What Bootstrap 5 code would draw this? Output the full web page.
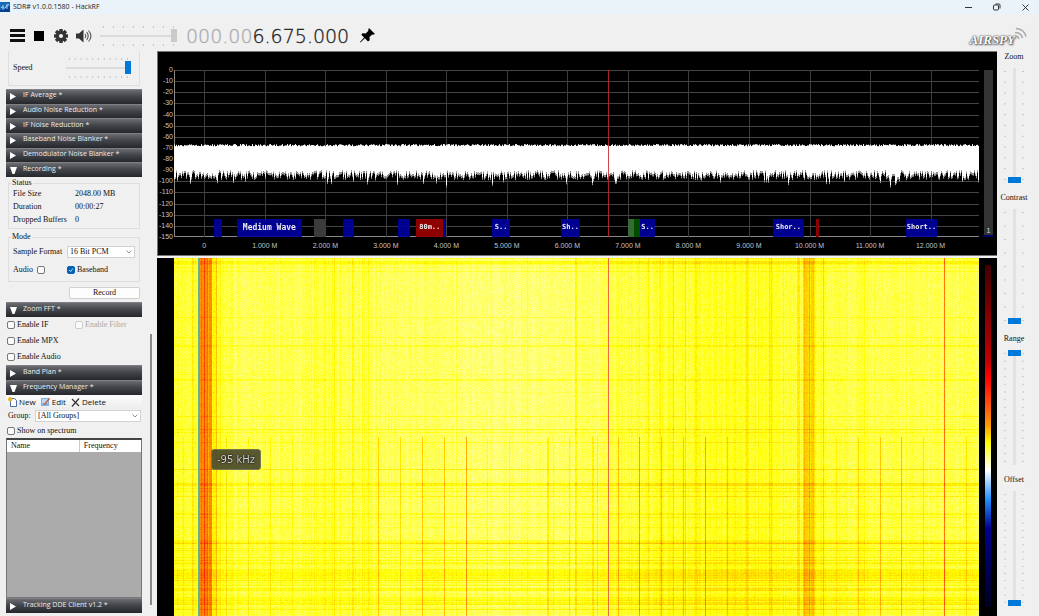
<!DOCTYPE html>
<html lang="en">
<head>
<meta charset="utf-8">
<meta name="viewport" content="width=device-width, initial-scale=1">
<title>SDR# v1.0.0.1580 - HackRF</title>
<link href="https://cdn.jsdelivr.net/npm/bootstrap@5.3.0/dist/css/bootstrap.min.css" rel="stylesheet">
<style>
  :root { --ui: "Open Sans", "Noto Sans", sans-serif; --form: "Liberation Serif", serif; --axis: "Liberation Sans", Arial, sans-serif; }
  body { background: #f0f0f0; color: #111; font: 8px/10px var(--form); }
  button, input, select { font: inherit; color: inherit; }
  .plain-btn { border: 0; background: none; padding: 0; line-height: 0; }
  .title-bar { height: 14px; background: #eaf3f9; font: 7px/14px var(--ui); color: #222; }
  .win-btns { gap: 21px; padding-right: 10px; }
  .tool-bar { height: 37px; padding: 6px 12px 0 10px; }
  .freq { font: 200 19px/24px "DejaVu Sans", sans-serif; -webkit-text-stroke: 0.3px; color: #222; margin: 0 11px 0 9px; }
  .freq .idle { color: #aaa; }
  .brand-word { font: italic bold 13px/16px var(--form); color: #fff; text-shadow: 0 0 2px #444, 1px 1px 2px #555, 0 0 1px #333; }

  /* sliders */
  input[type=range] { appearance: none; -webkit-appearance: none; background: none; margin: 0; padding: 0; display: block; min-width: 0; }
  .h-slide { --tick: #c4c4c4; background-image: linear-gradient(90deg, var(--tick) 1px, transparent 1px), linear-gradient(90deg, var(--tick) 1px, transparent 1px);
    background-size: calc((100% - 7px) / var(--n)) 2px; background-repeat: repeat-x; background-position: 3px 0, 3px 100%; height: 20px; padding: 3px 0; min-width: 0; }
  .h-slide input { width: 100%; height: 14px; }
  .h-slide input::-webkit-slider-runnable-track { height: 2px; background: #dadada; }
  .h-slide input::-webkit-slider-thumb { -webkit-appearance: none; width: 6px; height: 13px; margin-top: -6px; background: #0078d7; }
  .h-slide.dim { width: 77px; }
  .h-slide.dim input::-webkit-slider-thumb { background: #cacaca; }
  .v-slide { width: 20px; flex: 1 1 0; min-height: 0; display: flex; justify-content: center; position: relative; }
  .v-slide::before, .v-slide::after { content: ""; width: 2px; margin: 3px 0; flex: none;
    background: linear-gradient(#c8c8c8 1px, transparent 1px) 0 0 / 2px calc((100% - 1px) / var(--n)) repeat-y; }
  .v-slide input { writing-mode: vertical-lr; direction: rtl; width: 14px; height: 100%; margin: 0 1px; }
  .v-slide input::-webkit-slider-runnable-track { width: 3px; background: #e2e2e2; }
  .v-slide input::-webkit-slider-thumb { -webkit-appearance: none; width: 13px; height: 6px; margin-left: -5px; background: #0078d7; }
  .right-pane { width: 42px; padding: 1px 8px 0 0; }
  .v-group { flex: 1 1 0; min-height: 0; text-align: center; padding-bottom: 10px; }
  .v-group label { white-space: nowrap; margin-bottom: 6px; }

  /* left panel */
  .left-pane { width: 157px; padding: 0 15px 3px 6px; position: relative; }
  .scroll-thumb { position: absolute; right: 5px; top: 50%; bottom: 11px; width: 2px; background: #8a8a8a; }
  .sect { height: 15px; padding: 0 0 3px 4px; background: linear-gradient(#6a6c70, #42454a 45%, #25272b); border: 0; border-top: 1px solid #7d8084; color: #eee; font: 7px/10px var(--ui); display: flex; align-items: center; width: 100%; text-align: left; }
  .sect .arrow { width: 13px; line-height: 0; padding-top: 3px; }
  .sect-list { display: grid; grid-auto-rows: 1fr; height: 88px; }
  .sect-list .sect { height: auto; }
  .box { border: 1px solid #dedede; margin: 0 2px; padding: 0 4px; min-width: 0; }
  .box legend { all: revert; font: 8px/8px var(--form); padding: 0 1px; margin-left: -2px; }
  .stat { display: grid; grid-template-columns: 62px 1fr; line-height: 13px; margin: 0; }
  .stat dt { font-weight: 400; } .stat dd { margin: 0; }
  .tick-in { appearance: none; -webkit-appearance: none; width: 8px; height: 8px; border: 1px solid #777; border-radius: 2px; margin: 0; background: #fafafa; flex: none; }
  .tick-in:checked { border-color: #0063b8; background: #0063b8 url("data:image/svg+xml,%3Csvg xmlns='http://www.w3.org/2000/svg' viewBox='0 0 8 8'%3E%3Cpath d='M1.5 4l2 2 3-4' fill='none' stroke='white'/%3E%3C/svg%3E"); }
  .tick-in:disabled { border-color: #ccc; } .tick-in:disabled + label { color: #aaa; }
  .chk { display: flex; align-items: center; gap: 2px; height: 16px; padding-left: 1px; }
  .drop { appearance: none; -webkit-appearance: none; border: 1px solid #d2d2d2; height: 12px; line-height: 10px; padding: 0 2px; border-radius: 0;
    background: #fff url("data:image/svg+xml,%3Csvg xmlns='http://www.w3.org/2000/svg' width='6' height='4'%3E%3Cpath d='M.5.5l2.500 2.500 2.500-2.500' fill='none' stroke='%23666' stroke-width='.7'/%3E%3C/svg%3E") no-repeat right 2px center; }
  .rec { width: 71px; height: 12px; border: 1px solid #d0d0d0; border-radius: 2px; background: #fdfdfd; padding: 0; line-height: 10px; }
  .fm-tools { height: 14px; font: 8px/14px var(--ui); background: linear-gradient(#fcfcfc, #ececec); gap: 5px; padding-left: 2px; }
  .fm-tools button { display: flex; align-items: center; gap: 2px; line-height: 14px; }
  .freq-list { flex: 1 1 0; background: #ababab; border: 1px solid #777; border-top: 2px solid #444; min-height: 0; }
  .freq-list table { width: 100%; background: #fff; }
  .freq-list th { font-weight: 400; width: 54%; padding: 0 4px; line-height: 12px; }
  .freq-list th + th { width: 46%; border-left: 1px solid #ccc; }

  /* spectrum and waterfall */
  .scope { min-width: 0; }
  .spectrum { background: #000; color: #c4c4c4; font: 7px/8px var(--axis); padding: 18px 4px 18px 0; height: 205px; border: 1px solid #777; border-width: 1px 0 1px 1px; }
  .y-axis { width: 16px; margin: -4px 0; padding-right: 1px; text-align: right; }
  .plot { position: relative; flex: 1 1 0; min-width: 0; }
  .plot canvas, .fall canvas { position: absolute; inset: 0; width: 100%; height: 100%; display: block; }
  .band { position: absolute; bottom: 0; height: 18px; background: rgba(0,0,160,.9); color: #eee; font: bold 7px/17px "DejaVu Sans Mono", monospace; text-align: center; white-space: nowrap; }
  .band.wide { font-size: 8px; }
  .band.ham { background: rgba(150,0,0,.95); } .band.grey { background: #3b3b3b; } .band.lime { background: #366b36; } .band.green { background: #004d00; }
  .x-tick { position: absolute; top: 100%; width: 50px; margin: 5px 0 0 -25px; text-align: center; }
  .gain { width: 9px; margin-left: 5px; background: #333; border-bottom: 2px solid #000070; color: #ddd; text-align: center; }
  .fall-row { flex: 1 1 0; min-height: 0; background: #000; margin-top: 2px; padding-left: 17px; padding-right: 5px; }
  .fall { position: relative; flex: 1 1 0; min-width: 0; }
  .legend-bar { width: 6px; margin: 7px 1px 9px 6px; background: linear-gradient(#400000, #c00000 28%, #ff0000 33%, #ff5010 41%, #ff9a00 47%, #ffff00 52%, #fff 60%, #1e90ff 68.500%, #000091 77%, #000058 88%, #000020); }
  .tip { position: absolute; left: 37px; top: 191px; padding: 0 5px; border: 1px solid #77774c; border-radius: 3px; background: rgba(70,70,45,.9); color: #d4d4d4; font: 10px/19px "DejaVu Sans", sans-serif; text-shadow: 0 0 2px #000, 0 0 1px #000; white-space: nowrap; }
</style>
</head>
<body class="vh-100 d-flex flex-column overflow-hidden">
<header>
  <div class="title-bar d-flex align-items-center">
    <svg width="10" height="10" viewBox="0 0 10 10" style="margin-right:3px"><rect width="10" height="10" fill="#073f91"/><path d="M0 0h10v4L0 8z" fill="#1769b5"/><path d="M1 6c2-4 3 3 5-1s2 0 3-3M3 3v5M7 2v5" stroke="#b9dcff" fill="none" stroke-width=".9"/></svg>
    <span class="me-auto">SDR# v1.0.0.1580 - HackRF</span>
    <div class="win-btns d-flex align-items-center">
      <button class="plain-btn" aria-label="Minimize"><svg width="7" height="7"><path d="M0 3.500h7" stroke="#333"/></svg></button>
      <button class="plain-btn" aria-label="Restore"><svg width="8" height="8" viewBox="0 0 8 8" fill="none" stroke="#333"><rect x=".5" y="2" width="5" height="5" rx="1"/><path d="M2.500 1h3.500q1 0 1 1v3.500"/></svg></button>
      <button class="plain-btn" aria-label="Close"><svg width="7" height="7"><path d="M.5.5l6 6M6.500.5l-6 6" stroke="#222" stroke-width=".9"/></svg></button>
    </div>
  </div>
  <div class="tool-bar d-flex align-items-center">
    <button class="plain-btn" aria-label="Menu"><svg width="15" height="13"><path d="M0 1.500h15M0 6.500h15M0 11.500h15" stroke="#111" stroke-width="3"/></svg></button>
    <button class="plain-btn" style="margin-left:9px" aria-label="Stop"><svg width="10" height="10"><rect width="10" height="10"/></svg></button>
    <button class="plain-btn" style="margin-left:10px" aria-label="Settings"><svg width="14" height="14" viewBox="-7 -7 14 14" fill="#333"><g id="teeth"><rect x="-1.700" y="-7" width="3.400" height="14"/><rect x="-7" y="-1.700" width="14" height="3.400"/></g><use href="#teeth" transform="rotate(45)"/><circle r="5.200"/><circle r="2.100" fill="#f0f0f0"/></svg></button>
    <button class="plain-btn" style="margin-left:8px" aria-label="Mute"><svg width="16" height="14" viewBox="0 0 16 14"><path d="M0 4.500h3L7.500.5v13L3 9.500H0z" fill="#333"/><path d="M9 5q1.500 2 0 4M10.700 3.200q3 3.800 0 7.600M12.500 1.500q5 5.500 0 11" fill="none" stroke="#555" stroke-width="1.100"/></svg></button>
    <div class="h-slide dim ms-2" style="--n:7"><input type="range" aria-label="Volume" value="100"></div>
    <div class="freq"><span class="idle">000.00</span>6.675.000</div>
    <button class="plain-btn me-auto" aria-label="Pin"><svg width="15" height="15" viewBox="0 0 15 15"><path d="M9 0l6 6-2 .7-.8-.3-2.700 2.700.2 3.200-1.700 1.200L4.900 10.300.5 14.500 0 14l4.100-4.500L1.300 6.700l1.200-1.500 3.200.2L8.400 2.700 8.200 2z"/></svg></button>
    <div class="d-flex align-items-center"><span class="brand-word pt-2">AIRSPY</span><svg width="12" height="14" viewBox="0 0 12 14" class="mb-1" fill="none" stroke="#aaa" stroke-width="1.500"><path d="M0 9q3-.5 4 3M0 5.500q6 0 7.500 5.500M1 1.500q8 .5 10 8"/></svg></div>
  </div>
</header>
<main class="d-flex flex-grow-1" style="min-height:0">
  <aside class="left-pane d-flex flex-column">
    <div class="box d-flex align-items-center border-top-0" style="height:35px;flex:none">
      <label for="speed" style="width:53px;flex:none">Speed</label>
      <div class="h-slide flex-grow-1 me-1" style="--n:10"><input id="speed" type="range" value="100"></div>
    </div>
    <div class="sect-list" id="topSections" style="margin-top:3px;flex:none"></div>
    <fieldset class="box" style="margin-top:2px;height:50px;flex:none"><legend>Status</legend>
      <dl class="stat"><dt>File Size</dt><dd>2048.00 MB</dd><dt>Duration</dt><dd>00:00:27</dd><dt>Dropped Buffers</dt><dd>0</dd></dl>
    </fieldset>
    <fieldset class="box" style="margin-top:4px;height:49px;flex:none"><legend>Mode</legend>
      <div class="d-flex align-items-center" style="padding-top:5px"><label for="fmt" style="width:54px">Sample Format</label><select id="fmt" class="drop flex-grow-1"><option>16 Bit PCM</option></select></div>
      <div class="d-flex align-items-center" style="height:24px"><label for="au" class="me-1">Audio</label><input id="au" type="checkbox" class="tick-in"><span style="width:22px"></span><input id="bb" type="checkbox" class="tick-in" checked><label for="bb" style="margin-left:2px">Baseband</label></div>
    </fieldset>
    <div class="text-end" style="padding:5px 2px 0 0;height:20px;flex:none"><button class="rec d-block ms-auto">Record</button></div>
    <button class="sect flex-shrink-0"><span class="arrow"><svg width="7" height="7"><path d="M0 0h7L4.500 7h-2z" fill="#fff"/></svg></span>Zoom FFT *</button>
    <div class="row g-0 flex-shrink-0">
      <div class="col-6 chk"><input id="e1" type="checkbox" class="tick-in"><label for="e1">Enable IF</label></div>
      <div class="col-6 chk"><input id="e2" type="checkbox" class="tick-in" disabled><label for="e2">Enable Filter</label></div>
    </div>
    <div class="chk flex-shrink-0"><input id="e3" type="checkbox" class="tick-in"><label for="e3">Enable MPX</label></div>
    <div class="chk flex-shrink-0"><input id="e4" type="checkbox" class="tick-in"><label for="e4">Enable Audio</label></div>
    <button class="sect flex-shrink-0"><span class="arrow"><svg width="7" height="7"><path d="M0 0l6 3.500L0 7z" fill="#fff"/></svg></span>Band Plan *</button>
    <button class="sect flex-shrink-0"><span class="arrow"><svg width="7" height="7"><path d="M0 0h7L4.500 7h-2z" fill="#fff"/></svg></span>Frequency Manager *</button>
    <div class="fm-tools d-flex flex-shrink-0">
      <button class="plain-btn"><svg width="9" height="10" viewBox="0 0 9 10"><path d="M2.500 1.500h4l2 2v6h-6z" fill="#fff" stroke="#4b6ca6"/><circle cx="2.200" cy="2.200" r="2.200" fill="#f2b51c"/></svg>New</button>
      <button class="plain-btn"><svg width="9" height="10" viewBox="0 0 9 10"><path d="M0 1h8v8H0z" fill="#7fb0e8"/><path d="M1 3h6M1 5h6" stroke="#fff"/><path d="M2.500 7.500L8 1l1 1-5.500 6z" fill="#d3502b"/></svg>Edit</button>
      <button class="plain-btn"><svg width="9" height="9"><path d="M1 1l7 7M8 .5L1 8.500" stroke="#333" stroke-width="1.200"/></svg>Delete</button>
    </div>
    <div class="d-flex align-items-center flex-shrink-0" style="height:14px;padding:0 1px 0 2px"><label for="grp" style="width:27px">Group:</label><select id="grp" class="drop flex-grow-1"><option>[All Groups]</option></select></div>
    <div class="chk flex-shrink-0" style="height:15px"><input id="ss" type="checkbox" class="tick-in"><label for="ss">Show on spectrum</label></div>
    <div class="freq-list"><table><thead><tr><th>Name</th><th>Frequency</th></tr></thead></table></div>
    <button class="sect flex-shrink-0"><span class="arrow"><svg width="7" height="7"><path d="M0 0l6 3.500L0 7z" fill="#fff"/></svg></span>Tracking DDE Client v1.2 *</button>
    <div class="scroll-thumb"></div>
  </aside>

  <section class="scope flex-grow-1 d-flex flex-column">
    <div class="spectrum d-flex flex-shrink-0">
      <div class="y-axis d-flex flex-column justify-content-between" id="yAxis"></div>
      <div class="plot" id="plot"><canvas id="spec"></canvas></div>
      <div class="gain d-flex flex-column justify-content-end">1</div>
    </div>
    <div class="fall-row d-flex">
      <div class="fall"><canvas id="fall"></canvas><div class="tip">-95 kHz</div></div>
      <div class="legend-bar"></div>
    </div>
  </section>

  <aside class="right-pane d-flex flex-column">
    <div class="v-group d-flex flex-column align-items-center"><label for="zm">Zoom</label><div class="v-slide" style="--n:10"><input id="zm" type="range" value="0"></div></div>
    <div class="v-group d-flex flex-column align-items-center"><label for="ct">Contrast</label><div class="v-slide" style="--n:8"><input id="ct" type="range" value="0"></div></div>
    <div class="v-group d-flex flex-column align-items-center"><label for="rg">Range</label><div class="v-slide" style="--n:14"><input id="rg" type="range" value="100"></div></div>
    <div class="v-group d-flex flex-column align-items-center"><label for="of">Offset</label><div class="v-slide" style="--n:15"><input id="of" type="range" value="0"></div></div>
  </aside>
</main>
<script src="https://cdn.jsdelivr.net/npm/bootstrap@5.3.0/dist/js/bootstrap.bundle.min.js"></script>
<script>
const el = id => document.getElementById(id);
['IF Average', 'Audio Noise Reduction', 'IF Noise Reduction', 'Baseband Noise Blanker', 'Demodulator Noise Blanker', 'Recording'].forEach((t, i) => {
  const shape = i === 5 ? 'M0 0h7L4.500 7h-2z' : 'M0 0l6 3.500L0 7z';
  el('topSections').insertAdjacentHTML('beforeend', `<button class="sect"><span class="arrow"><svg width="7" height="7"><path d="${shape}" fill="#fff"/></svg></span>${t} *</button>`);
});
for (let d = 0; d >= -150; d -= 10) el('yAxis').insertAdjacentHTML('beforeend', `<span>${d}</span>`);

// frequency axis in MHz
const F0 = -0.5, SPAN = 13.3, pct = f => ((f - F0) / SPAN * 100).toFixed(2) + '%';
for (let m = 0; m <= 12; m++) el('plot').insertAdjacentHTML('beforeend', `<span class="x-tick" style="left:${pct(m)}">${m ? m + '.000 M' : '0'}</span>`);
[[.16,.29,'',''],[.54,1.61,'wide','Medium Wave'],[1.81,2,'grey',''],[2.3,2.47,'',''],[3.2,3.4,'',''],[3.5,3.95,'ham','80m..'],[3.95,4,'',''],
 [4.75,5.06,'','S..'],[5.9,6.2,'','Sh..'],[7,7.1,'lime',''],[7.1,7.2,'green',''],[7.2,7.45,'','S..'],[9.4,9.9,'','Shor..'],[10.1,10.15,'ham',''],[11.6,12.1,'','Short..']]
.forEach(([a, b, c, t]) => el('plot').insertAdjacentHTML('beforeend', `<div class="band ${c}" style="left:${pct(a)};width:${((b - a) / SPAN * 100).toFixed(2)}%">${t}</div>`));

let seed = 7;
const rnd = () => (seed = (seed * 1664525 + 1013904223) >>> 0) / 4294967296;
function fit(c) { c.width = c.clientWidth; c.height = c.clientHeight; return c.getContext('2d'); }

function drawSpectrum() {
  const c = el('spec'), g = fit(c), W = c.width, H = c.height;
  for (let i = 0; i <= 15; i++) { g.fillStyle = i === 15 ? '#888' : '#444'; g.fillRect(0, Math.min(H - 1, Math.round(i * H / 15)), W, 1); }
  for (let m = 0; m <= 12; m++) { g.fillStyle = '#3c3c3c'; g.fillRect(Math.round((m - F0) / SPAN * W), 0, 1, H); }
  g.fillStyle = '#888'; g.fillRect(0, 0, 1, H);
  const db = v => v * H / 150;
  for (let x = 0; x < W; x++) {
    const top = db(66.5 + rnd() * 2), r = rnd();
    const low = db(91 + rnd() * 7 + (r > .88 ? 4 : 0) + (r > .98 ? 3 : 0));
    g.fillStyle = '#fff'; g.fillRect(x, top, 1, low - top - 1);
    g.fillStyle = '#999'; g.fillRect(x, low - 1, 1, 2);
  }
  g.fillStyle = 'rgba(200,40,40,.85)'; g.fillRect(Math.round((6.675 - F0) / SPAN * W), 0, 1, H);
}

// colour scale: white, yellow, orange, red
const stops = [[255,255,255],[255,255,0],[255,150,0],[255,40,0]];
function heat(v) {
  v = Math.max(0, Math.min(2.999, v));
  const i = Math.floor(v), t = v - i;
  return stops[i].map((a, k) => a + (stops[i + 1][k] - a) * t);
}
// carriers: [x, width, strength, first row]
const carriers = [[3,1,.2,0],[18,2,.3,0],[21,1,.2,0],[26,12,1.3,0],[27,1,.3,0],[30,1,.7,0],[33,1,.4,0],[34,1,-.3,0],[38,4,.25,0],[42,1,.8,0],[45,2,.2,0],[160,1,.35,0],[166,1,.2,0],[178,2,.35,0],[194,1,.2,0],[282,1,.15,0],[353,1,.2,0],[401,2,.35,0],
 [465,1,.25,0],[474,1,.3,0],[486,1,.35,0],[499,1,.4,0],[511,1,.25,0],[521,2,.3,0],[572,2,.25,0],[595,3,.2,0],[623,3,.35,0],[629,12,.5,0],[630,2,.2,0],[635,1,.6,0],[638,2,.2,0],[649,1,.6,0],[690,1,.35,0],[732,1,.15,0],[770,1,1.6,0],
 [9,1,.3,178],[52,1,.4,178],[74,1,.4,178],[96,1,.3,178],[118,1,.2,178],[204,1,.75,178],[226,1,.6,178],[248,1,.8,178],[270,1,.8,178],[292,1,1.2,178],[313,1,.3,178],[335,1,.3,178],[373,2,.5,178],[379,1,.3,178],[395,1,.5,178],[418,2,.35,178],[423,1,.4,178],
 [444,1,.7,178],[465,1,.9,178],[487,1,.8,178],[509,1,.7,178],[531,1,1.1,178],[553,1,.6,178],[662,1,.3,178],[684,1,.55,178],[706,1,.8,178],[727,1,.8,178],[749,1,.5,178],[792,1,.5,178]];
// broadband bursts: [row, height, strength]
const bursts = [[0,1,.3],[3,3,.4],[6,1,.2],[9,1,.15],[13,1,.25],[59,1,.22],[79,1,.25],[87,2,.25],[116,1,.15],[121,2,.25],[134,1,.1],[158,1,.35],[171,1,.4],[174,1,.25],[184,1,.3],[211,1,.55],[225,3,.45],[230,1,.25],[233,1,.3],[238,1,.4],[255,2,.3],[259,1,.3],[269,1,.2],
 [282,4,.25],[285,1,.5],[290,1,.35],[292,1,.3],[299,1,.4],[302,1,.3],[304,2,.3],[311,6,.3],[317,4,.35],[322,1,.5],[324,1,.3],[327,1,.3],[330,3,.35],[339,3,.2],[342,1,.45],[344,3,.35],[351,1,.4]];
function drawWaterfall() {
  const c = el('fall'), g = fit(c), W = c.width, H = c.height, img = g.createImageData(W, H);
  const col = new Float32Array(W), late = new Float32Array(W), row = new Float32Array(H);
  for (let x = 0; x < W; x++) {
    const u = x / W * 805;
    col[x] = .6 + rnd() * .16 - .14 * Math.exp(-Math.pow((u - 340) / 100, 2)) + (u < 60 ? .08 : 0) + .14 * Math.exp(-Math.pow((u - 560) / 100, 2));
    if (u > 130 && u < 210 && rnd() > .65) col[x] += .14;
    if (u > 440 && u < 690 && rnd() > .75) col[x] += .14;
  }
  carriers.forEach(([x, w, s, y]) => { const a = Math.round(x * W / 805); for (let k = 0; k < w; k++) (y ? late : col)[a + k] += s; });
  bursts.forEach(([y, h, s]) => { const a = Math.round(y * H / 358); for (let k = 0; k < h && a + k < H; k++) row[a + k] += s; });
  for (let y = 0; y < H; y++) {
    const v = y / H * 358;
    if (v > 282) row[y] += rnd() * .18; else if (v > 165) row[y] += rnd() * .06;
    for (let x = 0; x < W; x++) {
      const k = heat(col[x] + row[y] * (x / W > .3 ? 1 : .75) + (v > 178 ? late[x] : 0) + (rnd() - .5) * .28), p = (y * W + x) * 4;
      img.data[p] = k[0]; img.data[p + 1] = k[1]; img.data[p + 2] = k[2]; img.data[p + 3] = 255;
    }
  }
  g.putImageData(img, 0, 0);
  g.fillStyle = '#62b18c'; g.fillRect(Math.round(24 * W / 805), 0, 2, H);
  g.fillStyle = 'rgba(235,80,60,.85)'; g.fillRect(Math.round((6.675 - F0) / SPAN * W), 0, 1, H);
}
function draw() { seed = 7; drawSpectrum(); drawWaterfall(); }
draw();
addEventListener('resize', draw);
</script>
</body>
</html>
